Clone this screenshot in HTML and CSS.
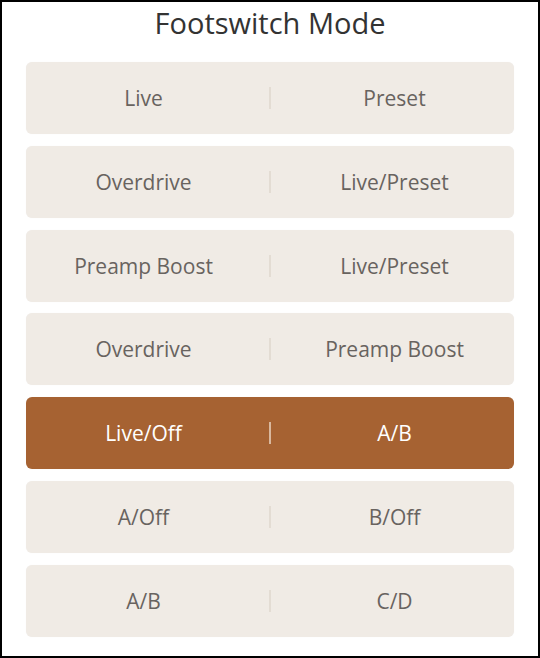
FILE: index.html
```html
<!DOCTYPE html>
<html>
<head>
<meta charset="utf-8">
<link rel="stylesheet" href="styles.css">
</head>
<body>
<div class="frame">
  <h1 class="title">Footswitch Mode</h1>
  <div class="list">
    <div class="option"><span class="label">Live</span><span class="sep"></span><span class="label">Preset</span></div>
    <div class="option"><span class="label">Overdrive</span><span class="sep"></span><span class="label">Live/Preset</span></div>
    <div class="option"><span class="label">Preamp Boost</span><span class="sep"></span><span class="label">Live/Preset</span></div>
    <div class="option"><span class="label">Overdrive</span><span class="sep"></span><span class="label">Preamp Boost</span></div>
    <div class="option active"><span class="label">Live/Off</span><span class="sep"></span><span class="label">A/B</span></div>
    <div class="option"><span class="label">A/Off</span><span class="sep"></span><span class="label">B/Off</span></div>
    <div class="option"><span class="label">A/B</span><span class="sep"></span><span class="label">C/D</span></div>
  </div>
</div>
</body>
</html>
```

FILE: styles.css
```css
html, body {
  margin: 0;
  padding: 0;
  background: #ffffff;
}

.frame {
  box-sizing: border-box;
  width: 540px;
  height: 658px;
  border: 2px solid #000000;
  font-family: "Open Sans", "Noto Sans", sans-serif;
  display: flex;
  flex-direction: column;
}

.title {
  margin: 0;
  display: flex;
  align-items: center;
  justify-content: center;
  font-size: 29px;
  font-weight: 400;
  color: #333333;
  padding-bottom: 19px;
  box-sizing: border-box;
  height: 60px;
}

.list {
  display: flex;
  flex-direction: column;
  gap: 11.8px;
  padding: 0 24px;
}

.option {
  height: 72px;
  border-radius: 6px;
  background: #f0ebe5;
  display: grid;
  grid-template-columns: 1fr auto 1fr;
  align-items: center;
  color: #68635f;
  font-size: 21px;
  box-shadow: 0 0 1px rgba(0, 0, 0, 0.06);
}

.label {
  text-align: center;
}

.label:first-child {
  padding-right: 8px;
}

.label:last-child {
  padding-left: 4px;
}

.sep {
  width: 2px;
  height: 22px;
  background: #e3dcd3;
}

.option.active {
  background: #a66232;
  color: #ffffff;
}

.option.active .sep {
  background: #d9b89e;
}
```
